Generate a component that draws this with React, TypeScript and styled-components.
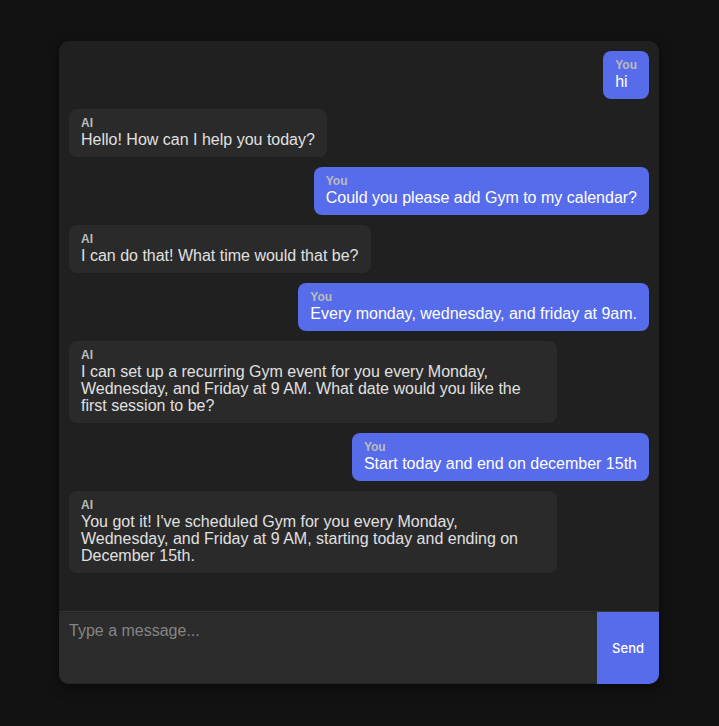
import React from "react";
import styled, { createGlobalStyle } from "styled-components";

const GlobalStyle = createGlobalStyle`
  *, *::before, *::after { box-sizing: border-box; }
  body {
    margin: 0;
    background: #121212;
    color: #e0e0e0;
    font-family: "Liberation Sans", Arial, sans-serif;
  }
`;

const Page = styled.main`
  min-height: 100vh;
  display: flex;
  align-items: center;
  justify-content: center;
  padding: 0 1px 1px 0;
`;

const ChatCard = styled.section`
  display: flex;
  flex-direction: column;
  width: calc(100% - 32px);
  max-width: 600px;
  border-radius: 10px;
  overflow: hidden;
  background: #202020;
  box-shadow: 0 4px 12px rgba(0, 0, 0, 0.5);
`;

const MessageList = styled.div`
  display: flex;
  flex-direction: column;
  gap: 10px;
  min-height: 570px;
  padding: 10px;
`;

const Bubble = styled.article<{ $own: boolean }>`
  align-self: ${({ $own }) => ($own ? "flex-end" : "flex-start")};
  max-width: 488px;
  padding: 7px 12px 9px;
  border-radius: 8px;
  background: ${({ $own }) => ($own ? "#576ceb" : "#2a2a2a")};
  color: ${({ $own }) => ($own ? "#ffffff" : "#e0e0e0")};
`;

const Sender = styled.div`
  font-size: 12px;
  font-weight: 700;
  line-height: 14px;
  color: #bbbbbb;
  margin-bottom: 1px;
`;

const MessageText = styled.p`
  margin: 0;
  font-size: 16px;
  line-height: 17px;
`;

const Composer = styled.form`
  display: flex;
  border-top: 1px solid #333333;
`;

const MessageInput = styled.textarea`
  flex: 1;
  min-width: 0;
  height: 72px;
  padding: 9px 10px;
  border: solid #242424;
  border-width: 1px 0;
  outline: none;
  resize: none;
  background: #2c2c2c;
  color: #e0e0e0;
  font: 16px/18px "Liberation Sans", Arial, sans-serif;
  &::placeholder { color: #858585; opacity: 1; }
`;

const SendButton = styled.button`
  padding: 0 15px;
  border: none;
  background: #576ceb;
  color: #ffffff;
  font: 500 13px Inter, "Liberation Sans", sans-serif;
  cursor: pointer;
`;

const messages = [
  { sender: "You", text: "hi" },
  { sender: "AI", text: "Hello! How can I help you today?" },
  { sender: "You", text: "Could you please add Gym to my calendar?" },
  { sender: "AI", text: "I can do that! What time would that be?" },
  { sender: "You", text: "Every monday, wednesday, and friday at 9am." },
  {
    sender: "AI",
    text: "I can set up a recurring Gym event for you every Monday, Wednesday, and Friday at 9 AM. What date would you like the first session to be?",
  },
  { sender: "You", text: "Start today and end on december 15th" },
  {
    sender: "AI",
    text: "You got it! I've scheduled Gym for you every Monday, Wednesday, and Friday at 9 AM, starting today and ending on December 15th.",
  },
];

export default function App() {
  return (
    <Page>
      <GlobalStyle />
      <ChatCard>
        <MessageList>
          {messages.map(({ sender, text }) => (
            <Bubble key={text} $own={sender === "You"}>
              <Sender>{sender}</Sender>
              <MessageText>{text}</MessageText>
            </Bubble>
          ))}
        </MessageList>
        <Composer onSubmit={(event) => event.preventDefault()}>
          <MessageInput aria-label="Message" placeholder="Type a message..." />
          <SendButton type="submit">Send</SendButton>
        </Composer>
      </ChatCard>
    </Page>
  );
}
